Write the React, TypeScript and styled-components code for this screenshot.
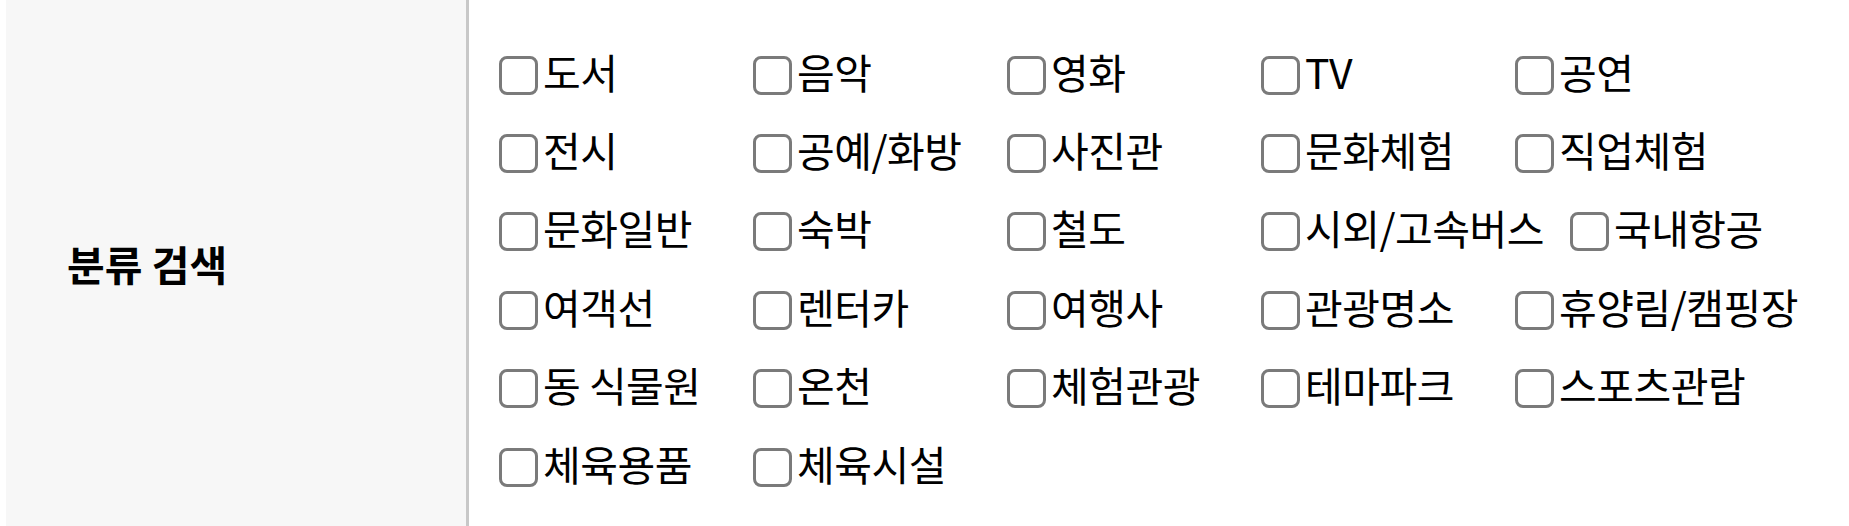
import React from 'react';
import styled, { createGlobalStyle } from 'styled-components';

const GlobalStyle = createGlobalStyle`
  html, body {
    margin: 0;
    padding: 0;
    background: #ffffff;
  }
  body {
    font-family: "Noto Sans CJK KR", "Noto Sans", sans-serif;
    color: #000000;
  }
`;

const CATEGORIES = [
  '도서', '음악', '영화', 'TV', '공연',
  '전시', '공예/화방', '사진관', '문화체험', '직업체험',
  '문화일반', '숙박', '철도', '시외/고속버스', '국내항공',
  '여객선', '렌터카', '여행사', '관광명소', '휴양림/캠핑장',
  '동 식물원', '온천', '체험관광', '테마파크', '스포츠관람',
  '체육용품', '체육시설',
];

const SearchRow = styled.div`
  display: flex;
  height: 526px;
  padding-left: 6px;
  box-sizing: border-box;
`;

const RowHeader = styled.div`
  width: 463px;
  flex-shrink: 0;
  display: flex;
  align-items: center;
  padding-left: 61px;
  box-sizing: border-box;
  background: #f7f7f7;
  border-right: 3px solid #c8c8c8;
  font-size: 41px;
  font-weight: 700;
`;

const OptionList = styled.div`
  flex: 1;
  display: flex;
  flex-wrap: wrap;
  align-content: flex-start;
  padding: 32px 0 0 30px;
`;

const Option = styled.label`
  display: flex;
  align-items: center;
  min-width: 254px;
  height: 78.4px;
  padding-right: 26px;
  box-sizing: border-box;
  cursor: pointer;
`;

const Box = styled.input`
  appearance: none;
  width: 39px;
  height: 39px;
  margin: 8px 5px 0 0;
  flex-shrink: 0;
  border: 3px solid #7a7a7a;
  border-radius: 8px;
  background: #ffffff;
  box-sizing: border-box;
`;

const OptionText = styled.span`
  font-size: 41px;
  line-height: 49px;
  letter-spacing: -0.5px;
  white-space: nowrap;
`;

export default function App() {
  return (
    <>
      <GlobalStyle />
      <SearchRow>
        <RowHeader>분류 검색</RowHeader>
        <OptionList>
          {CATEGORIES.map((name) => (
            <Option key={name}>
              <Box type="checkbox" />
              <OptionText>{name}</OptionText>
            </Option>
          ))}
        </OptionList>
      </SearchRow>
    </>
  );
}
